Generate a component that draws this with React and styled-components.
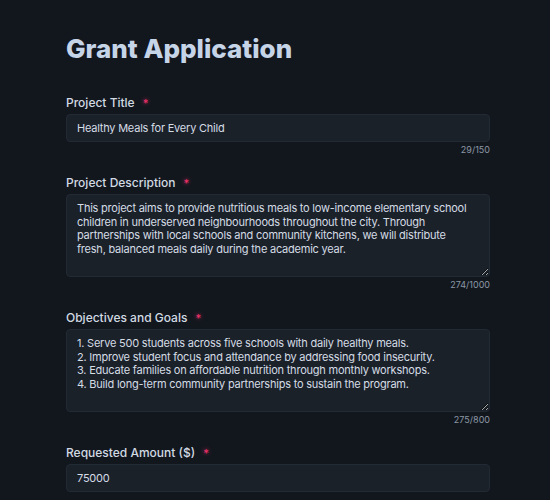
import { useState } from "react";
import { createGlobalStyle, styled } from "styled-components";

const GlobalStyle = createGlobalStyle`
  * { box-sizing: border-box; }
  html, body {
    margin: 0;
    background-color: #12171e;
    font-family: Inter, "Noto Sans", sans-serif;
  }
`;

const FIELDS = [
  {
    id: "title",
    label: "Project Title",
    max: 150,
    value: "Healthy Meals for Every Child",
  },
  {
    id: "description",
    label: "Project Description",
    max: 1000,
    multiline: true,
    value:
      "This project aims to provide nutritious meals to low-income elementary school children in underserved neighbourhoods throughout the city. Through partnerships with local schools and community kitchens, we will distribute fresh, balanced meals daily during the academic year.",
  },
  {
    id: "objectives",
    label: "Objectives and Goals",
    max: 800,
    multiline: true,
    value:
      "1. Serve 500 students across five schools with daily healthy meals.\n2. Improve student focus and attendance by addressing food insecurity.\n3. Educate families on affordable nutrition through monthly workshops.\n4. Build long-term community partnerships to sustain the program.",
  },
];

const COUNTS = { title: 29, description: 274, objectives: 275 };

const Field = ({ field }) => {
  const [value, setValue] = useState(field.value);
  const count = value === field.value ? COUNTS[field.id] : value.length;
  return (
    <FieldWrapper>
      <Label htmlFor={field.id}>
        {field.label}
        <Required>*</Required>
      </Label>
      {field.multiline ? (
        <TextArea
          id={field.id}
          value={value}
          onChange={(e) => setValue(e.currentTarget.value)}
        />
      ) : (
        <Input
          id={field.id}
          value={value}
          onChange={(e) => setValue(e.currentTarget.value)}
        />
      )}
      <Counter>
        {count}/{field.max}
      </Counter>
    </FieldWrapper>
  );
};

export default function App() {
  const [amount, setAmount] = useState("75000");
  return (
    <>
      <GlobalStyle />
      <Page>
        <Title>Grant Application</Title>
        {FIELDS.map((field) => (
          <Field key={field.id} field={field} />
        ))}
        <FieldWrapper>
          <Label htmlFor="amount">
            Requested Amount ($)
            <Required>*</Required>
          </Label>
          <Input
            id="amount"
            value={amount}
            onChange={(e) => setAmount(e.currentTarget.value)}
          />
        </FieldWrapper>
      </Page>
    </>
  );
}

const Page = styled.div`
  display: flex;
  flex-direction: column;
  width: 424px;
  margin-left: 66px;
  padding-top: 34px;
`;

const Title = styled.h1`
  margin: 0 0 30px;
  font-size: 26px;
  font-weight: 800;
  line-height: 30px;
  color: #c6d4e8;
`;

const FieldWrapper = styled.div`
  display: flex;
  flex-direction: column;
  margin-bottom: 18px;
`;

const Label = styled.label`
  display: flex;
  align-items: center;
  gap: 8px;
  height: 16px;
  margin-bottom: 4px;
  font-size: 12px;
  font-weight: 500;
  color: #d2dae3;
`;

const Required = styled.span`
  color: #f0306a;
  font-size: 11px;
  line-height: 1;
  padding-top: 3px;
  text-shadow: 0 0 4px rgba(240, 48, 106, 0.8);
`;

const fieldBase = `
  width: 100%;
  background-color: #1b2129;
  border: 1px solid #222a33;
  border-radius: 4px;
  color: #d4dce5;
  font-family: Inter, "Noto Sans", sans-serif;
  font-size: 11px;
  letter-spacing: -0.02em;
  outline: none;
  padding: 0 10px;
`;

const Input = styled.input`
  ${fieldBase}
  height: 28px;
`;

const TextArea = styled.textarea`
  ${fieldBase}
  height: 83px;
  padding: 7px 14px 7px 10px;
  line-height: 13.5px;
  resize: vertical;
  display: block;
`;

const Counter = styled.div`
  align-self: flex-end;
  margin-top: 2px;
  font-size: 9px;
  line-height: 12px;
  color: #8d98a5;
`;
